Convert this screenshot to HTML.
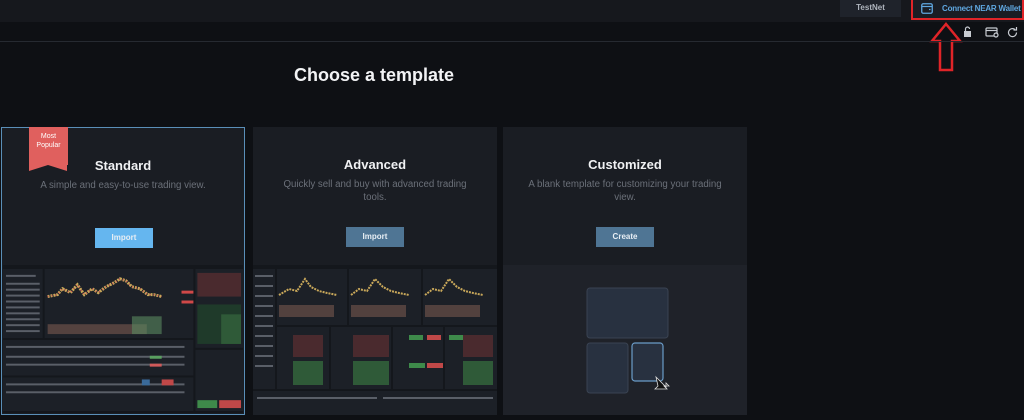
<!DOCTYPE html>
<html><head><meta charset="utf-8"><style>
*{margin:0;padding:0;box-sizing:border-box}
body{width:1024px;height:418px;background:#0e1014;font-family:"Liberation Sans",sans-serif;position:relative;overflow:hidden}
.top{position:absolute;left:0;top:0;width:1024px;height:22px;background:#16181d}
.testnet{position:absolute;left:840px;top:0;width:61px;height:17px;background:#1f232b;color:#aeb4bd;font-size:8px;font-weight:bold;text-align:center;line-height:16px}
.conn{position:absolute;left:911px;top:-2px;width:113px;height:22px;border:2px solid #e02428;background:#1a1d24;color:#5fa7e0;font-size:8px;font-weight:bold;line-height:18px;padding-left:29px;white-space:nowrap;letter-spacing:-0.2px}
.line{position:absolute;left:0;top:41px;width:1024px;height:1px;background:#262a31}
h1{position:absolute;left:0;width:748px;top:65px;text-align:center;color:#f2f3f5;font-size:18px;font-weight:bold}
.card{position:absolute;top:127px;width:244px;height:288px;background:#1a1d23}
.card.sel{border:1px solid #5a8fb8}
.card h2{position:absolute;top:30px;width:100%;text-align:center;color:#f0f1f3;font-size:13px;font-weight:bold}
.card p{position:absolute;top:51px;left:26px;right:26px;text-align:center;color:#6b7079;font-size:9.7px;line-height:13px}
.btn{position:absolute;top:100px;left:93px;width:58px;height:20px;color:#e8eef4;font-size:8px;font-weight:bold;text-align:center;line-height:20px}
.prev{position:absolute;left:0;top:138px;width:100%;height:150px;background:#14171c}
.ribbon{position:absolute;left:29px;top:127px;width:39px;height:38px;background:#e0605e;color:#fff;font-size:7px;text-align:center;line-height:9px;padding-top:5px}
.ribbon:after{content:"";position:absolute;left:0;top:38px;border-left:19.5px solid #e0605e;border-right:19.5px solid #e0605e;border-bottom:6px solid transparent}
</style></head><body>
<div class="top"></div>
<div class="testnet">TestNet</div>
<div class="conn">Connect NEAR Wallet
<svg style="position:absolute;left:8px;top:3px" width="12" height="11" viewBox="0 0 12 11"><rect x="0.75" y="0.75" width="10.5" height="9.5" rx="1.5" fill="none" stroke="#5fa7e0" stroke-width="1.3"/><line x1="1" y1="3.5" x2="11" y2="3.5" stroke="#5fa7e0" stroke-width="1.2"/><line x1="8" y1="6.5" x2="9.5" y2="6.5" stroke="#5fa7e0" stroke-width="1.2"/></svg></div>
<svg style="position:absolute;left:929px;top:21px" width="34" height="52" viewBox="0 0 34 52"><path d="M17 3 L31 20 L23 20 L23 49 L11 49 L11 20 L3 20 Z" fill="none" stroke="#e02428" stroke-width="2.5" stroke-linejoin="miter"/></svg>
<svg style="position:absolute;left:962px;top:26px" width="62" height="12" viewBox="0 0 62 12" fill="none" stroke="#c8ccd2" stroke-width="1.2"><rect x="2" y="5" width="7" height="6" fill="#c8ccd2" stroke="none"/><path d="M3.5 5V3a2 2 0 0 1 4 0"/><rect x="24" y="2" width="11" height="8" rx="1"/><line x1="24" y1="4.5" x2="35" y2="4.5"/><circle cx="34" cy="9" r="2" fill="#16181d"/><path d="M53 3.5a4 4 0 1 0 1.5 3"/><path d="M54.5 1v3h-3"/></svg>
<div class="line"></div>
<h1>Choose a template</h1>

<div class="card sel" style="left:1px"><h2>Standard</h2><p>A simple and easy-to-use trading view.</p><div class="btn" style="background:#65b6ef">Import</div>
<div class="prev" style="left:1px;width:240px;top:137px;height:148px">
<svg width="240" height="148" viewBox="0 0 242 150" preserveAspectRatio="none">
<rect x="0" y="0" width="242" height="150" fill="#14171c"/>
<g fill="#1c2027"><rect x="0" y="4" width="40" height="70"/><rect x="42" y="4" width="150" height="70"/><rect x="194" y="4" width="48" height="80"/><rect x="0" y="76" width="192" height="36"/><rect x="0" y="114" width="192" height="34"/><rect x="194" y="86" width="48" height="62"/></g>
<g fill="#5a5f68"><rect x="3" y="10" width="30" height="2"/><rect x="3" y="18" width="34" height="2"/><rect x="3" y="24" width="34" height="2"/><rect x="3" y="30" width="34" height="2"/><rect x="3" y="36" width="34" height="2"/><rect x="3" y="42" width="34" height="2"/><rect x="3" y="48" width="34" height="2"/><rect x="3" y="54" width="34" height="2"/><rect x="3" y="60" width="34" height="2"/><rect x="3" y="66" width="34" height="2"/><rect x="3" y="82" width="180" height="2"/><rect x="3" y="92" width="180" height="2"/><rect x="3" y="100" width="180" height="2"/><rect x="3" y="120" width="180" height="2"/><rect x="3" y="128" width="180" height="2"/></g>
<polyline points="45,32 55,30 60,24 68,28 75,20 82,30 90,24 96,28 104,22 112,18 118,14 124,16 130,22 138,24 146,30 152,30 160,32" fill="none" stroke="#c9a85a" stroke-width="3" stroke-dasharray="2 1"/>
<polyline points="45,32 55,30 60,24 68,28 75,20 82,30 90,24 96,28 104,22 112,18 118,14 124,16 130,22 138,24 146,30 152,30 160,32" fill="none" stroke="#d05858" stroke-width="1.5" stroke-dasharray="1 3"/>
<g fill="#7a5a50"><rect x="45" y="60" width="100" height="10" opacity=".6"/></g>
<g fill="#5a8a60"><rect x="130" y="52" width="30" height="18" opacity=".6"/></g>
<rect x="180" y="26" width="12" height="3" fill="#d04848"/><rect x="180" y="36" width="12" height="3" fill="#d04848"/>
<rect x="196" y="8" width="44" height="24" fill="#4a2a2e"/><rect x="196" y="40" width="44" height="40" fill="#1f3a2a"/><rect x="220" y="50" width="20" height="30" fill="#2f5a38"/>
<rect x="148" y="92" width="12" height="3" fill="#5aa060"/><rect x="148" y="100" width="12" height="3" fill="#d05a5a"/>
<rect x="196" y="137" width="20" height="8" fill="#3e8a4a"/><rect x="218" y="137" width="22" height="8" fill="#c04848"/>
<rect x="140" y="116" width="8" height="6" fill="#3a6a9a"/><rect x="160" y="116" width="12" height="6" fill="#c04848"/>
</svg></div></div>
<div class="ribbon">Most<br>Popular</div>

<div class="card" style="left:253px"><h2>Advanced</h2><p>Quickly sell and buy with advanced trading tools.</p><div class="btn" style="background:#4f7594">Import</div>
<div class="prev"><svg width="244" height="150" viewBox="0 0 244 150">
<rect width="244" height="150" fill="#14171c"/>
<g fill="#1c2027"><rect x="0" y="4" width="22" height="120"/><rect x="24" y="4" width="70" height="56"/><rect x="96" y="4" width="72" height="56"/><rect x="170" y="4" width="74" height="56"/><rect x="24" y="62" width="52" height="62"/><rect x="78" y="62" width="60" height="62"/><rect x="140" y="62" width="50" height="62"/><rect x="192" y="62" width="52" height="62"/><rect x="0" y="126" width="244" height="24"/></g>
<g fill="none" stroke="#c9a85a" stroke-width="2" stroke-dasharray="2 1"><polyline points="26,30 36,24 44,26 52,14 58,22 66,26 74,28 84,30"/><polyline points="98,30 106,24 114,26 122,14 130,22 138,26 146,28 156,30"/><polyline points="172,30 180,24 188,26 196,14 204,22 212,26 220,28 230,30"/></g>
<g fill="#6a5048" opacity=".7"><rect x="26" y="40" width="55" height="12"/><rect x="98" y="40" width="55" height="12"/><rect x="172" y="40" width="55" height="12"/></g>
<g fill="#4a2a2e"><rect x="40" y="70" width="30" height="22"/><rect x="100" y="70" width="36" height="22"/><rect x="210" y="70" width="30" height="22"/></g>
<g fill="#2f5a38"><rect x="40" y="96" width="30" height="24"/><rect x="100" y="96" width="36" height="24"/><rect x="210" y="96" width="30" height="24"/></g>
<g fill="#3e8a4a"><rect x="156" y="70" width="14" height="5"/><rect x="196" y="70" width="14" height="5"/><rect x="156" y="98" width="16" height="5"/></g>
<g fill="#c04848"><rect x="174" y="70" width="14" height="5"/><rect x="174" y="98" width="16" height="5"/></g>
<g fill="#5a5f68"><rect x="2" y="10" width="18" height="2"/><rect x="2" y="20" width="18" height="2"/><rect x="2" y="30" width="18" height="2"/><rect x="2" y="40" width="18" height="2"/><rect x="2" y="50" width="18" height="2"/><rect x="2" y="60" width="18" height="2"/><rect x="2" y="70" width="18" height="2"/><rect x="2" y="80" width="18" height="2"/><rect x="2" y="90" width="18" height="2"/><rect x="2" y="100" width="18" height="2"/><rect x="4" y="132" width="120" height="2"/><rect x="130" y="132" width="110" height="2"/></g>
</svg></div></div>

<div class="card" style="left:503px"><h2>Customized</h2><p style="left:14px;right:14px">A blank template for customizing your trading view.</p><div class="btn" style="background:#4f7594">Create</div>
<div class="prev" style="background:#1f2229"><svg width="244" height="150" viewBox="0 0 244 150">
<rect x="84" y="23" width="81" height="50" rx="3" fill="#283140" stroke="#3a4352"/>
<rect x="84" y="78" width="41" height="50" rx="3" fill="#283140" stroke="#3a4352"/>
<rect x="129" y="78" width="31" height="38" rx="3" fill="#283140" stroke="#6a9cc8" stroke-width="1.2"/>
<path d="M153 112 L163 122 L163 118 L166 121 L161 121 L164 124 L152 124 L155 121 Z" fill="#111" stroke="#ddd" stroke-width=".8"/>
</svg></div></div>
</body></html>
